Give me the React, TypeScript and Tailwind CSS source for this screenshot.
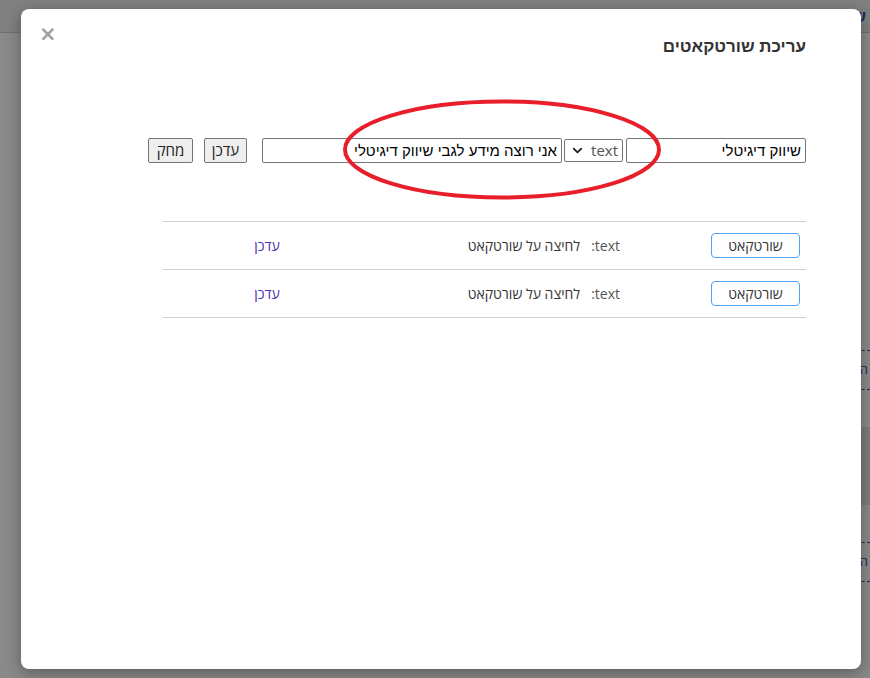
import { ChevronDown } from 'lucide-react';

const font = { fontFamily: '"Open Sans", "Noto Sans", sans-serif' };
const arial = { fontFamily: '"Liberation Sans", "Noto Sans", sans-serif' };

function ShortcutRow() {
  return (
    <div className="flex items-center h-[48px] border-b border-[#cfcfcf] pr-[6px]">
      <div className="w-[89px] h-[25px] border border-blue-400 rounded-[4px] bg-white text-[14px] text-[#333] flex items-center justify-center cursor-pointer">
        שורטקאט
      </div>
      <span className="mr-[91px] text-[14px] text-[#555]">text:</span>
      <span className="mr-[11px] text-[14px] text-[#333]">לחיצה על שורטקאט</span>
      <a className="mr-[188px] text-[14px] text-[#4a2db3] cursor-pointer">עדכן</a>
    </div>
  );
}

export default function App() {
  return (
    <div dir="rtl" className="relative w-[870px] h-[678px] overflow-hidden bg-white" style={font}>
      {/* page behind the modal */}
      <div className="h-[33px] bg-[#ececec] border-b border-[#d0d0d0] flex items-center pr-[4px] gap-[24px] text-[15px] font-bold text-[#2c4fa8]">
        <span>ש</span>
        <span className="text-[#bbb] font-normal">|</span>
        <span>שאלות ותשובות (Q&A)</span>
      </div>
      <div className="flex flex-col items-start pt-[317px]">
        <div className="w-[40px] h-[40px] border-y border-dashed border-[#2c4fa8] text-[#2c4fa8] text-[13px] flex items-center pr-[2px]">הה</div>
        <div className="w-[40px] h-[78px] bg-[#e8e8e8] mt-[37px]" />
        <div className="w-[40px] h-[40px] border-y border-dashed border-[#2c4fa8] text-[#2c4fa8] text-[13px] flex items-center pr-[2px] mt-[37px]">הה</div>
      </div>

      {/* overlay */}
      <div className="absolute inset-0 bg-black/[0.46]" />

      {/* modal */}
      <div className="absolute left-[21px] top-[9px] w-[840px] h-[660px] bg-white rounded-[8px] shadow-[0_4px_16px_rgba(0,0,0,0.35)]">
        <button className="absolute left-[18px] top-[15px] text-[#a0a0a0] text-[21px] font-bold leading-none" style={{ fontFamily: '"DejaVu Sans", sans-serif' }}>
          ×
        </button>

        <div className="pr-[55px] pt-[25px]">
          <h2 className="text-[17px] font-bold text-[#333]" style={arial}>
            עריכת שורטקאטים
          </h2>

          <div className="relative flex items-center mt-[78px] h-[25px]">
            <input
              className="w-[180px] h-[25px] border border-[#767676] rounded-[2px] px-[4px] text-[15px] text-black outline-none"
              style={arial}
              defaultValue="שיווק דיגיטלי"
            />
            <div className="mr-[3px] w-[59px] h-[23px] border border-[#767676] rounded-[2px] flex items-center justify-between pr-[4px] pl-[5px] text-[15px] text-[#555]">
              <span>text</span>
              <ChevronDown size={15} strokeWidth={3} className="text-[#222]" />
            </div>
            <input
              className="mr-[2px] w-[300px] h-[25px] border border-[#767676] rounded-[2px] px-[4px] text-[15px] text-black outline-none"
              style={arial}
              defaultValue="אני רוצה מידע לגבי שיווק דיגיטלי"
            />
            <button className="mr-[15px] w-[43px] h-[25px] border border-[#767676] rounded-[2px] bg-[#efefef] text-[15px] text-[#222]">
              עדכן
            </button>
            <button className="mr-[11px] w-[45px] h-[25px] border border-[#767676] rounded-[2px] bg-[#efefef] text-[15px] text-[#222]">
              מחק
            </button>

            {/* red annotation ellipse */}
            <svg className="absolute left-[320px] top-[-40px] pointer-events-none" width="322" height="103" viewBox="0 0 322 103">
              <ellipse cx="161" cy="51.5" rx="157" ry="48" fill="none" stroke="#e81f2a" strokeWidth="4" />
            </svg>
          </div>

          <div className="w-[643px] mt-[58px] border-t border-[#cfcfcf]">
            <ShortcutRow />
            <ShortcutRow />
          </div>
        </div>
      </div>
    </div>
  );
}
